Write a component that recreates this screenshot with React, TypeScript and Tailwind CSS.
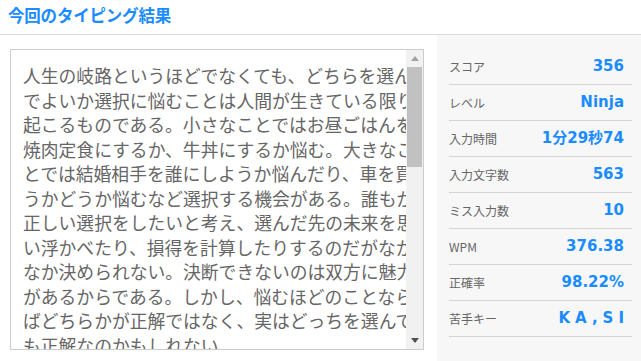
import React from 'react';

const lines = [
  '人生の岐路というほどでなくても、どちらを選ん',
  'でよいか選択に悩むことは人間が生きている限り',
  '起こるものである。小さなことではお昼ごはんを',
  '焼肉定食にするか、牛丼にするか悩む。大きなこ',
  'とでは結婚相手を誰にしようか悩んだり、車を買',
  'うかどうか悩むなど選択する機会がある。誰もが',
  '正しい選択をしたいと考え、選んだ先の未来を思',
  'い浮かべたり、損得を計算したりするのだがなか',
  'なか決められない。決断できないのは双方に魅力',
  'があるからである。しかし、悩むほどのことなら',
  'ばどちらかが正解ではなく、実はどっちを選んで',
  'も正解なのかもしれない。',
];

const stats: { label: string; value: string; wide?: boolean }[] = [
  { label: 'スコア', value: '356' },
  { label: 'レベル', value: 'Ninja' },
  { label: '入力時間', value: '1分29秒74' },
  { label: '入力文字数', value: '563' },
  { label: 'ミス入力数', value: '10' },
  { label: 'WPM', value: '376.38' },
  { label: '正確率', value: '98.22%' },
  { label: '苦手キー', value: 'KA,SI', wide: true },
];

const App: React.FC = () => {
  return (
    <div className="w-[641px] h-[361px] bg-white overflow-hidden font-['Noto_Sans_CJK_JP',sans-serif]">
      <header className="h-[35px] border-b border-[#d9d9d9] flex items-center pl-[8px]">
        <h1 className="text-[16.5px] font-bold text-[#1a8cff] leading-none tracking-[-0.2px] -mt-[4px]">
          今回のタイピング結果
        </h1>
      </header>

      <div className="flex h-[326px]">
        <div className="w-[437px] shrink-0 pl-[10px] pt-[14px]">
          <div className="relative w-[414px] h-[301px] border border-[#cccccc] overflow-hidden">
            <div className="pl-[12px] pt-[13px] text-[17.8px] leading-[24.5px] text-[#666666]">
              {lines.map((l) => (
                <div key={l} className="whitespace-nowrap">
                  {l}
                </div>
              ))}
            </div>

            {/* scrollbar */}
            <div className="absolute right-0 top-0 bottom-0 w-[17px] bg-[#f1f1f1] flex flex-col items-center">
              <div className="h-[17px] flex items-center justify-center">
                <svg width="8" height="5" viewBox="0 0 8 5">
                  <path d="M0 5 L4 0 L8 5 Z" fill="#a3a3a3" />
                </svg>
              </div>
              <div className="w-[15px] h-[100px] bg-[#c1c1c1]" />
              <div className="flex-1" />
              <div className="h-[17px] flex items-center justify-center">
                <svg width="8" height="5" viewBox="0 0 8 5">
                  <path d="M0 0 L8 0 L4 5 Z" fill="#505050" />
                </svg>
              </div>
            </div>
          </div>
        </div>

        <aside className="flex-1 bg-[#f7f7f7] pl-[12px] pr-[9px] pt-[14px]">
          {stats.map((s) => (
            <div
              key={s.label}
              className="h-[36px] border-b border-[#d4d4d4] flex items-center justify-between pr-[8px]"
            >
              <span className="text-[12px] text-[#666666]">{s.label}</span>
              <span
                className={`text-[15px] font-bold text-[#1a8cff] font-['DejaVu_Sans','Noto_Sans_CJK_JP',sans-serif] ${
                  s.wide ? 'tracking-[5px] -mr-[5px]' : ''
                }`}
              >
                {s.value}
              </span>
            </div>
          ))}
        </aside>
      </div>
    </div>
  );
};

export default App;
